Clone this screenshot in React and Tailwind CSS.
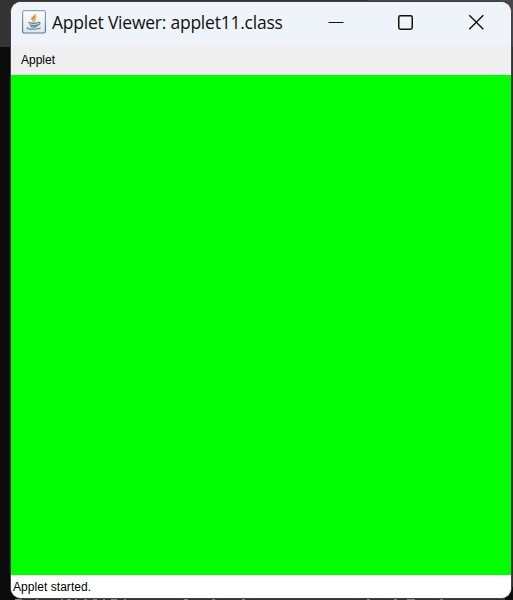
const tracesUnderWindow = [
  [15, 7], [36, 2], [61, 2], [67, 4], [75, 2], [84, 3], [93, 4], [103, 2], [111, 6], [124, 2],
  [184, 4], [212, 3], [242, 3], [367, 3], [394, 3], [407, 8], [440, 3],
];

function JavaIcon() {
  return (
    <svg className="h-6 w-6 shrink-0" viewBox="0 0 24 24" fill="none">
      <defs>
        <linearGradient id="tile" x1="0" y1="0" x2="0" y2="1">
          <stop offset="0" stopColor="#ffffff" />
          <stop offset="1" stopColor="#e2e4e6" />
        </linearGradient>
        <linearGradient id="rim" x1="0" y1="0" x2="0" y2="1">
          <stop offset="0" stopColor="#88a9c2" />
          <stop offset="1" stopColor="#547895" />
        </linearGradient>
      </defs>
      <rect x="0.6" y="0.6" width="22.8" height="22.4" rx="1.8" fill="url(#tile)" stroke="url(#rim)" strokeWidth="1.2" />
      <path d="M12.9 3.9c.9 2-3.9 3.2-3.5 5.2.2 1 1.4 1.6 2 2.4-.2-1.2-.5-1.7.2-2.6.8-1.1 2.3-2.1 1.3-5Z" fill="#ee8a2e" stroke="#ee8a2e" strokeWidth=".7" />
      <path d="M14.4 6.7c-1.8.8-2.6 1.7-2 2.7.5.8.5 1.4 0 2.2 1.5-.9 1.4-1.7.7-2.5-.5-.7.1-1.5 1.3-2.4Z" fill="#ee8a2e" stroke="#ee8a2e" strokeWidth=".5" />
      <path d="M6.8 12.7c2.8.7 6.7.6 9.2 0M8 14.8c2.4.7 5.2.7 7.5 0M9 16.6c1.8.5 4 .5 5.7 0M15.9 12.6c2.8-.8 2.9 1.8-.3 2.8M5.6 17.8c-1.4.9 2 1.4 5.9 1.3 4.2 0 6.3-.6 6.5-1.2" stroke="#5b87a8" strokeWidth="1.3" strokeLinecap="round" />
    </svg>
  );
}

export default function App() {
  return (
    <div className="relative h-[600px] w-[513px] overflow-hidden bg-[linear-gradient(to_bottom,#333333_47px,#0b0b0b_47px)] pl-[10px] pt-px">
      <div className="absolute right-0 top-0 h-[47px] w-[145px] bg-[#474747]" />
      <div className="absolute right-0 top-[47px] h-[540px] w-2 bg-[#333333]" />
      <div className="absolute bottom-0 left-5 right-2 h-[3px] bg-[#343234]" />
      <div className="relative flex h-[598px] w-[502px] flex-col overflow-hidden rounded-[11px] border border-[#424242] bg-white">
        <header className="flex h-[43px] shrink-0 items-center bg-[#eef4f9] pb-[3px] pl-[11px] pr-[27px]">
          <JavaIcon />
          <h1 className="ml-[6px] w-[260px] whitespace-nowrap pb-px font-['Open_Sans','Noto_Sans',sans-serif] text-[17.5px] leading-6 tracking-[-0.23px] text-[#111]">
            Applet Viewer: applet11.class
          </h1>
          <div className="ml-auto flex items-center pb-px text-[#111]">
            <svg className="mr-[53px] h-4 w-4" viewBox="0 0 16 16" stroke="currentColor"><path d="M.5 8.5h15" /></svg>
            <svg className="mr-[55px] h-4 w-4" viewBox="0 0 16 16" fill="none" stroke="currentColor" strokeWidth="1.5"><rect x="1.75" y="1.75" width="13.5" height="13.5" rx="1.7" /></svg>
            <svg className="h-4 w-4" viewBox="0 0 16 16" stroke="currentColor" strokeWidth="1.4"><path d="m1.3 1.3 14 14M15.3 1.3l-14 14" /></svg>
          </div>
        </header>
        <nav className="flex h-[30px] shrink-0 items-center bg-[#efefef] pl-[10px] font-['Liberation_Sans',Arial,sans-serif] text-[12px] leading-4 text-black">
          Applet
        </nav>
        <main className="h-[500px] shrink-0 bg-[#00ff00]" />
        <footer className="flex min-h-0 flex-1 items-center bg-white pl-[2px] font-['Liberation_Sans',Arial,sans-serif] text-[12px] leading-4 tracking-[0.05px] text-black">
          Applet started.
        </footer>
      </div>
      <svg className="absolute bottom-0 left-0 h-px w-[513px]" viewBox="0 0 513 1">
        {tracesUnderWindow.map(([x, width]) => (
          <rect key={x} x={x} width={width} height="1" fill="#858585" />
        ))}
      </svg>
    </div>
  );
}
